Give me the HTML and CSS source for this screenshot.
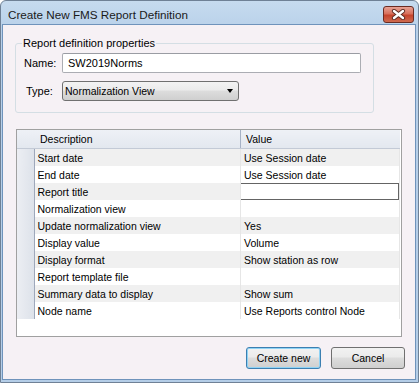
FILE: index.html
```html
<!DOCTYPE html>
<html lang="en">
<head>
  <meta charset="UTF-8">
  <title>Create New FMS Report Definition</title>
  <link rel="stylesheet" href="styles.css">
</head>
<body>
  <div class="window">
    <div class="titlebar">
      <span class="title">Create New FMS Report Definition</span>
      <button class="close-button" title="Close">
        <svg width="15" height="11" viewBox="0 0 15 11">
          <path d="M3 2 L12 9 M12 2 L3 9" stroke="#5a2a22" stroke-width="4.2" stroke-linecap="round"/>
          <path d="M3 2 L12 9 M12 2 L3 9" stroke="#fff" stroke-width="2.4" stroke-linecap="round"/>
        </svg>
      </button>
    </div>
    <div class="client">
      <fieldset class="props">
        <legend>Report definition properties</legend>
        <div class="prop-row">
          <label class="prop-label">Name:</label>
          <div class="text-input">SW2019Norms</div>
        </div>
        <div class="prop-row type-row">
          <label class="prop-label type-label">Type:</label>
          <div class="select">
            <span>Normalization View</span>
            <span class="arrow"></span>
          </div>
        </div>
      </fieldset>

      <div class="grid">
        <table>
          <thead>
            <tr>
              <th class="row-head"></th>
              <th class="desc">Description</th>
              <th class="value">Value</th>
            </tr>
          </thead>
          <tbody>
            <tr class="odd"><td class="row-head"></td><td>Start date</td><td>Use Session date</td></tr>
            <tr><td class="row-head"></td><td>End date</td><td>Use Session date</td></tr>
            <tr class="odd"><td class="row-head"></td><td>Report title</td><td class="edit-cell"><div class="edit-box"></div></td></tr>
            <tr><td class="row-head"></td><td>Normalization view</td><td></td></tr>
            <tr class="odd"><td class="row-head"></td><td>Update normalization view</td><td>Yes</td></tr>
            <tr><td class="row-head"></td><td>Display value</td><td>Volume</td></tr>
            <tr class="odd"><td class="row-head"></td><td>Display format</td><td>Show station as row</td></tr>
            <tr><td class="row-head"></td><td>Report template file</td><td></td></tr>
            <tr class="odd"><td class="row-head"></td><td>Summary data to display</td><td>Show sum</td></tr>
            <tr><td class="row-head"></td><td>Node name</td><td>Use Reports control Node</td></tr>
          </tbody>
        </table>
      </div>

      <div class="buttons">
        <button class="button default-button">Create new</button>
        <button class="button">Cancel</button>
      </div>
    </div>
  </div>
</body>
</html>
```

FILE: styles.css
```css
body {
  margin: 0;
  padding: 0;
  font-family: "Liberation Sans", Arial, sans-serif;
  font-size: 11px;
  color: #000;
  background: #fff;
}
.window {
  width: 419px;
  height: 383px;
  box-sizing: border-box;
  border: 1px solid #6f8196;
  border-radius: 6px 6px 0 0;
  background: linear-gradient(#c6dbef, #b8d0e9 30px, #b4cde7);
  display: flex;
  flex-direction: column;
}
.titlebar {
  height: 23px;
  display: flex;
  align-items: center;
  justify-content: space-between;
  padding: 0 4px 0 7px;
}
.title {
  font-size: 11.7px;
  color: #1a1a1a;
  padding-top: 4px;
}
.close-button {
  width: 31px;
  height: 17px;
  margin-top: 4px;
  padding: 0;
  border: 1px solid #6b2b22;
  border-radius: 3px;
  background: linear-gradient(#e7a295, #d86f5b 45%, #c5432c 55%, #cf6a4f);
  display: flex;
  align-items: center;
  justify-content: center;
}
.client {
  flex: 1;
  margin: 0 2px 2px 1px;
  border: 1px solid #6f93bb;
  background: #f6f1f5;
  padding: 11px 0 0 12px;
}
.props {
  width: 359px;
  box-sizing: border-box;
  margin: 0;
  padding: 3px 8px 11px 8px;
  border: 1px solid #d4dee4;
  border-radius: 3px;
}
.props legend {
  margin-left: -2px;
  padding: 0 1px;
  line-height: 14px;
  font-size: 11px;
}
.prop-row {
  display: flex;
  align-items: center;
}
.type-row {
  margin-top: 8px;
}
.prop-label {
  width: 38px;
  font-size: 11px;
}
.type-label {
  width: 36px;
  margin-left: 2px;
}
.text-input {
  width: 299px;
  height: 20px;
  box-sizing: border-box;
  border: 1px solid #abadb3;
  border-top-color: #9a9ca3;
  border-radius: 2px;
  background: #fff;
  padding: 0 5px;
  line-height: 18px;
  font-size: 11px;
}
.select {
  width: 177px;
  height: 20px;
  box-sizing: border-box;
  border: 1px solid #707070;
  border-radius: 3px;
  background: linear-gradient(#f3f3f3, #ebebeb 45%, #dddddd 50%, #cfcfcf);
  display: flex;
  align-items: center;
  justify-content: space-between;
  padding: 0 5px 0 2px;
  font-size: 10.5px;
}
.arrow {
  width: 0;
  height: 0;
  border-left: 3.5px solid transparent;
  border-right: 3.5px solid transparent;
  border-top: 4px solid #000;
}
.grid {
  width: 386px;
  height: 208px;
  box-sizing: border-box;
  margin-top: 16px;
  margin-left: 1px;
  border: 1px solid #a0a0a0;
  background: #fff;
  font-size: 10.5px;
}
.grid table {
  width: 383px;
  border-collapse: collapse;
  table-layout: fixed;
}
.grid th {
  height: 18px;
  padding: 0;
  font-weight: normal;
  text-align: left;
  background: linear-gradient(#eef1f6, #e3e8ef);
  border-bottom: 1px solid #c3cad6;
}
.grid th.desc {
  width: 200px;
  padding-left: 6px;
  border-right: 1px solid #a6b2c6;
}
.grid th.value {
  padding-left: 5px;
}
.grid th.row-head {
  width: 17px;
}
.grid td {
  height: 17px;
  padding: 0 0 0 3px;
  white-space: nowrap;
  border-right: 1px solid #e6e6e6;
}
.grid tr.odd td {
  background: #f0f0f0;
}
.grid td.row-head,
.grid tr.odd td.row-head {
  padding: 0;
  background: linear-gradient(to right, #eceef3, #dde2ea);
  border-right: 1px solid #9ea8bb;
}
.grid td.edit-cell {
  padding: 0;
}
.edit-box {
  height: 17px;
  box-sizing: border-box;
  margin-left: -1px;
  border: 1px solid #646464;
  background: #fff;
}
.buttons {
  display: flex;
  justify-content: flex-end;
  gap: 10px;
  margin-top: 10px;
  padding-right: 10px;
}
.button {
  width: 74px;
  height: 22px;
  padding: 0;
  border: 1px solid #707070;
  border-radius: 3px;
  background: linear-gradient(#f2f2f2, #ebebeb 45%, #dddddd 50%, #cfcfcf);
  font-family: "Liberation Sans", Arial, sans-serif;
  font-size: 10.5px;
  color: #000;
}
.default-button {
  width: 75px;
  border-color: #3c7fb1;
  box-shadow: inset 0 0 0 1px #8fd3f5;
}
```
